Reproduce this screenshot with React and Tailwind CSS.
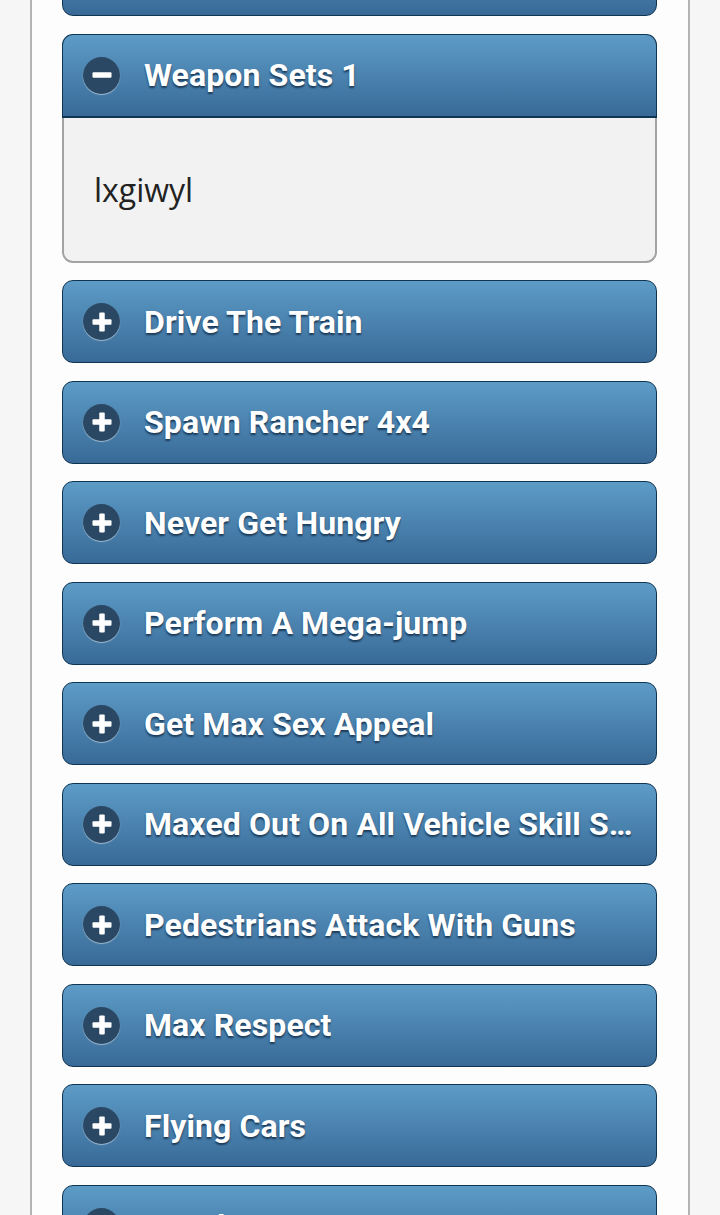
import React from 'react';

const items = [
  'Drive The Train',
  'Spawn Rancher 4x4',
  'Never Get Hungry',
  'Perform A Mega-jump',
  'Get Max Sex Appeal',
  'Maxed Out On All Vehicle Skill Stats',
  'Pedestrians Attack With Guns',
  'Max Respect',
  'Flying Cars',
  'Weather Stormy',
];

function Icon({ open }) {
  return (
    <span className="flex h-[37px] w-[37px] shrink-0 items-center justify-center rounded-full bg-[#2a4864] shadow-[0_1px_1px_rgba(255,255,255,0.5)]">
      <svg width="22" height="22" viewBox="0 0 22 22">
        <rect x="1.5" y="8.25" width="19" height="5.5" rx="1" fill="#fff" />
        {!open && <rect x="8.25" y="1.5" width="5.5" height="19" rx="1" fill="#fff" />}
      </svg>
    </span>
  );
}

function Header({ title, open }) {
  return (
    <div
      className={
        'flex items-center gap-[24px] border border-[#0f3553] bg-gradient-to-b from-[#5d9cc7] to-[#396a97] pl-[20px] pr-[16px] ' +
        (open ? 'h-[84px] rounded-t-[11px] border-b-2' : 'h-[83px] rounded-[11px]')
      }
    >
      <Icon open={open} />
      <span className="truncate text-[32px] leading-[40px] font-bold tracking-[0.1px] text-white [text-shadow:0_2px_2px_#1b3956]">
        {title}
      </span>
    </div>
  );
}

export default function App() {
  return (
    <div className="min-h-screen bg-[#f6f6f6] font-['Roboto',sans-serif]">
      <div className="ml-[30px] w-[660px] h-[1215px] overflow-hidden border-x-2 border-[#b3b3b3] bg-[#fdfdfd]">
        <div className="mt-[-67px] flex flex-col gap-[17.5px] pl-[30px] pr-[31px]">
          <Header title="Weapon Sets 0" />
          <div>
            <Header title="Weapon Sets 1" open />
            <div className="h-[145px] rounded-b-[11px] border-x-2 border-b-2 border-[#a3a3a3] bg-[#f2f2f2] pl-[30px] pt-[50px] text-[32px] leading-[44px] text-[#222] font-['Open_Sans',sans-serif]">
              lxgiwyl
            </div>
          </div>
          {items.map((t) => (
            <Header key={t} title={t} />
          ))}
        </div>
      </div>
    </div>
  );
}
